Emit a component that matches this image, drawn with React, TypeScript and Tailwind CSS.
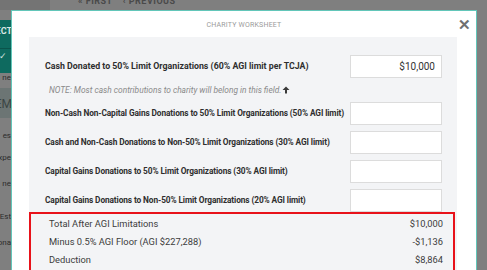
import React from "react";

const rows = [
  "Non-Cash Non-Capital Gains Donations to 50% Limit Organizations (50% AGI limit)",
  "Cash and Non-Cash Donations to Non-50% Limit Organizations (30% AGI limit)",
  "Capital Gains Donations to 50% Limit Organizations (30% AGI limit)",
  "Capital Gains Donations to Non-50% Limit Organizations (20% AGI limit)",
];

const totals: [string, string][] = [
  ["Total After AGI Limitations", "$10,000"],
  ["Minus 0.5% AGI Floor (AGI $227,288)", "-$1,136"],
  ["Deduction", "$8,864"],
];

export default function App() {
  return (
    <div
      className="relative w-[487px] h-[270px] overflow-hidden bg-[#7f7f7f]"
      style={{ fontFamily: "Roboto, 'Liberation Sans', sans-serif" }}
    >
      {/* background app (dimmed) */}
      <div className="absolute left-0 top-0 w-[50px] h-[10px] bg-[#747474]" />
      <div className="absolute left-[78px] top-[-5px] flex gap-[10px] text-[9px] font-bold tracking-[0.5px] text-[#4a4a4a]">
        <span>« FIRST</span>
        <span>‹ PREVIOUS</span>
      </div>
      <div className="absolute left-0 top-[20px] w-[14px] h-[53px] bg-[#0e6a5f]">
        <div className="absolute right-[2px] top-[5px] text-[9px] font-bold text-[#d8e6e4]">ECT</div>
        <div className="absolute left-0 top-[28px] w-[14px] h-px bg-[#0a544b]" />
        <div className="absolute left-[-1px] top-[27px] w-[8px] h-[18px] text-[9px] text-[#cfe1de] leading-[18px]">✓</div>
      </div>
      <div className="absolute right-[476px] top-[72px] text-[8px] text-[#2c2c2c]">ne</div>
      <div className="absolute left-0 top-[88px] w-[14px] h-[30px] bg-[#6c7574]">
        <div className="absolute right-[2px] top-[7px] text-[12px] text-[#3b4544]">EM</div>
      </div>
      <div className="absolute right-[476px] top-[130px] text-[8px] text-[#2c2c2c]">es</div>
      <div className="absolute right-[476px] top-[152px] text-[8px] text-[#2c2c2c]">xpe</div>
      <div className="absolute right-[476px] top-[178px] text-[8px] text-[#2c2c2c]">ne</div>
      <div className="absolute right-[476px] top-[211px] text-[8px] text-[#2c2c2c]">Est</div>
      <div className="absolute right-[476px] top-[237px] text-[8px] text-[#2c2c2c]">ona</div>

      {/* modal */}
      <div className="absolute left-[11px] top-[10px] w-[466px] h-[320px] bg-white border border-[#62c6b9] flex flex-col">
        <div className="relative h-[26px] shrink-0 flex items-center justify-center pt-[2px]">
          <span className="text-[7px] tracking-[0.2px] text-[#9a9a9a] uppercase">Charity Worksheet</span>
          <span className="absolute right-[5px] top-[7px] text-[15px] leading-[15px] font-bold text-[#6f6f6f]">✕</span>
        </div>
        <div className="shrink-0 ml-[17px] mr-[19px] bg-[#f3f4f6] flex flex-col pt-[18px]">
          <div className="flex items-center justify-between pl-[16px] pr-[15px] h-[23px]">
            <span className="whitespace-nowrap text-[8.8px] font-bold text-[#2e2e2e]">
              Cash Donated to 50% Limit Organizations (60% AGI limit per TCJA)
            </span>
            <div className="shrink-0 w-[92px] h-[23px] bg-white border border-[#dcdcdc] flex items-center justify-end pr-[6px] text-[10px] text-[#333]">
              $10,000
            </div>
          </div>
          <div className="h-[24px] flex items-center pl-[20px] text-[8.4px] italic text-[#8a8a8a]">
            NOTE: Most cash contributions to charity will belong in this field.
            <svg width="8" height="8" viewBox="0 0 8 8" className="ml-[1px]">
              <path d="M4 0.5 L7.5 4 L5 4 L5 7.5 L3 7.5 L3 4 L0.5 4 Z" fill="#3a3a3a" />
            </svg>
          </div>
          <div className="flex flex-col gap-[6px]">
            {rows.map((r) => (
              <div key={r} className="flex items-center justify-between pl-[16px] pr-[15px] h-[23px]">
                <span className="whitespace-nowrap text-[8.3px] tracking-[-0.1px] font-bold text-[#2e2e2e]">{r}</span>
                <div className="shrink-0 w-[92px] h-[23px] bg-white border border-[#dcdcdc]" />
              </div>
            ))}
          </div>
          <div className="mr-[2px] border-2 border-[#e8121a] pl-[18px] pr-[10px] pt-px pb-[1px] flex flex-col">
            {totals.map(([l, v]) => (
              <div key={l} className="h-[18px] flex items-center justify-between text-[9.3px] text-[#3c3c3c]">
                <span>{l}</span>
                <span>{v}</span>
              </div>
            ))}
          </div>
          <div className="h-[20px]" />
        </div>
      </div>
    </div>
  );
}
